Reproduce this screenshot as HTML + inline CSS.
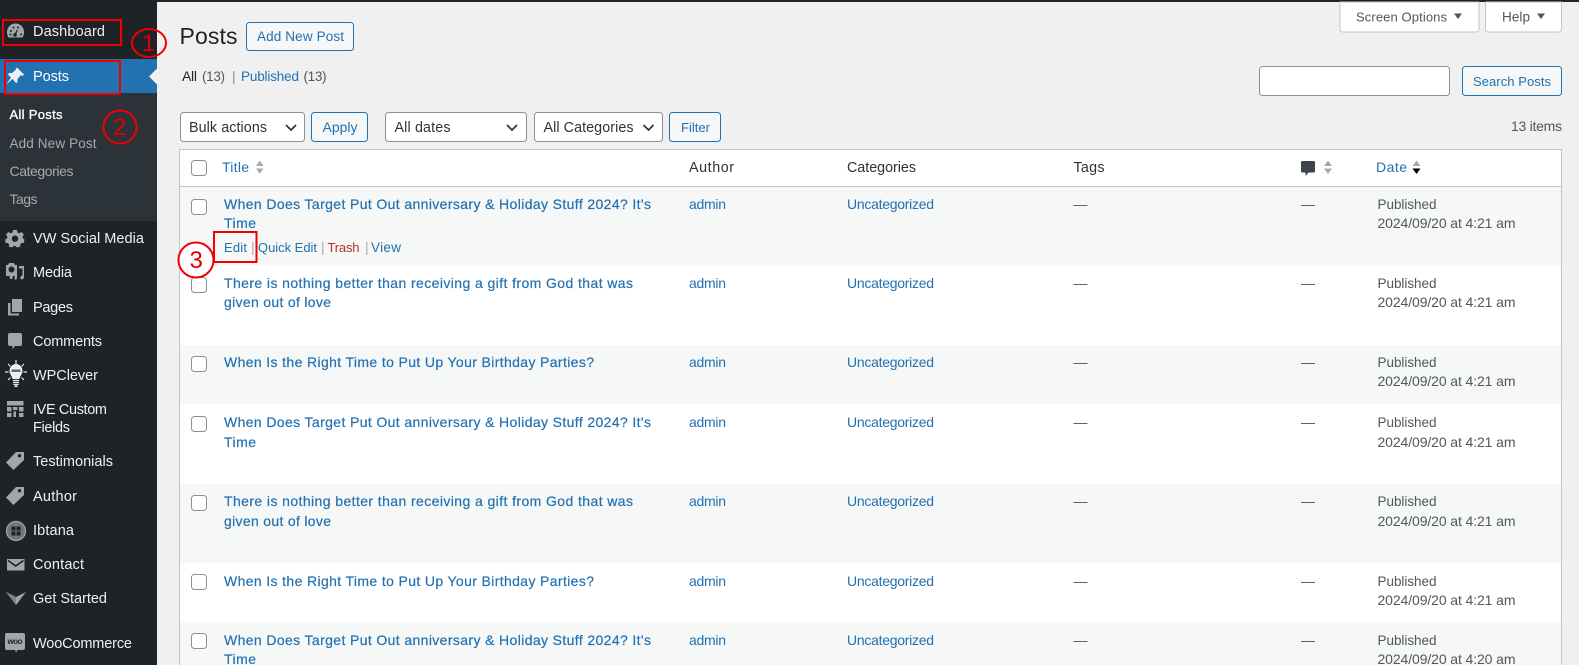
<!DOCTYPE html>
<html><head><meta charset="utf-8"><title>Posts</title>
<style>
html,body{margin:0;padding:0;background:#f0f0f1;width:1579px;height:665px;overflow:hidden}
svg{display:block}
text{font-family:"Liberation Sans",sans-serif;font-size:14px;fill:#50575e}
.m{fill:#f0f0f1;font-size:14.500px}
.s{fill:#a7abb0}
.l{fill:#2271b1}
.t{fill:#2271b1;stroke:#2271b1;stroke-width:.2px}
.h{fill:#2c3338;font-size:14.300px}
.i{fill:#a2a6ab}
.r{fill:none;stroke:#f00000;stroke-width:2}
.n{fill:#e00000;font-size:24px}
.f{fill:#fff;stroke:#8c8f94}
.b{fill:#f6f7f7;stroke:#2271b1}
.x{font-size:13px}
.y{font-size:13.500px}
</style></head><body>
<svg width="1579" height="665" viewBox="0 0 1579 665" xmlns="http://www.w3.org/2000/svg">
<rect width="1579" height="665" fill="#f0f0f1"/>
<rect width="1579" height="2" fill="#1d2327"/>
<!-- sidebar -->
<rect width="157" height="665" fill="#1d2327"/>
<rect y="59" width="157" height="34" fill="#2271b1"/>
<rect y="93" width="157" height="128" fill="#2c3338"/>
<path d="M157 68.500L149 76.500L157 84.500Z" fill="#f0f0f1"/>
<text class="m" x="33" y="36" textLength="72">Dashboard</text>
<text class="m" x="33" y="81" textLength="36" style="fill:#fff">Posts</text>
<text class="x" x="9.500" y="119" textLength="53" style="fill:#fff;stroke:#fff;stroke-width:.3px">All Posts</text>
<text class="s y" x="9.500" y="148" textLength="87">Add New Post</text>
<text class="s" x="9.500" y="176" textLength="64">Categories</text>
<text class="s" x="9.500" y="204" textLength="28">Tags</text>
<text class="m" x="33" y="243" textLength="111">VW Social Media</text>
<text class="m" x="33" y="277" textLength="39">Media</text>
<text class="m" x="33" y="312" textLength="40">Pages</text>
<text class="m" x="33" y="346" textLength="69">Comments</text>
<text class="m" x="33" y="380" textLength="65">WPClever</text>
<text class="m" x="33" y="414" textLength="74">IVE Custom</text>
<text class="m" x="33" y="432" textLength="37">Fields</text>
<text class="m" x="33" y="466" textLength="80">Testimonials</text>
<text class="m" x="33" y="501" textLength="44">Author</text>
<text class="m" x="33" y="535" textLength="41">Ibtana</text>
<text class="m" x="33" y="569" textLength="51">Contact</text>
<text class="m" x="33" y="603" textLength="74">Get Started</text>
<text class="m" x="33" y="648" textLength="99">WooCommerce</text>
<!-- sidebar icons -->
<path class="i" d="M15.500 23.500C10.500 23.500 7 27.500 7 32C7 34 7.500 36 8.500 37.500H22.500C23.500 36 24 34 24 32C24 27.500 20.500 23.500 15.500 23.500Z"/>
<g fill="#1d2327"><circle cx="11" cy="31" r="1"/><circle cx="13.500" cy="27.500" r="1"/><circle cx="18" cy="27.500" r="1"/><circle cx="10.500" cy="34.500" r="1"/><circle cx="21" cy="34.500" r="1"/><circle cx="15" cy="35" r="1.800"/><path d="M14.500 34L17 29.500L17.800 30L16 35Z"/></g>
<path d="M17 67.500L24 74.500L22.500 76L21 75L17.500 79L17.500 82L16 83L12.500 79L7 84L7 83.500L11 77.500L8 74.500L9 73L12 73L16 69.500L15.500 69Z" fill="#f0f0f1"/>
<path class="i" fill-rule="evenodd" d="M13 230H17L17.500 232.500L19.500 233.300L21.700 232L24 234.800L22.500 236.500L23 238.500L24.500 239.500L23.700 243L21.500 243L20 244.800L20.500 246.500L17 247.500L15.500 246L13.500 246L12 247.500L8.700 246.500L9.200 244.500L7.800 243L5.700 243L5 239.500L7 238.500L7.300 236.500L6 234.500L8.300 232L10.500 233.300L12.500 232.500ZM15 235.500A3.200 3.200 0 1 0 15.001 241.900A3.200 3.200 0 1 0 15 235.500Z"/>
<path class="i" fill-rule="evenodd" d="M9 263H14L15 265H17V276H13L12 279H10L9.500 276H6V265H8ZM11.500 266.500A3 3 0 1 0 11.501 272.500A3 3 0 1 0 11.500 266.500Z"/>
<path class="i" d="M19 266H24V277C24 279.500 21 280 20.500 278.500C20 277 21 275.500 22.500 275.500V268.500H19ZM14.500 278C14.500 276.500 15.500 275 17 275.200V277C17 280.500 14.500 280.500 14.500 278Z"/>
<path class="i" d="M12 299H22V312H12ZM8 303H10.500V313.500H19V315.500H8Z"/>
<path class="i" d="M10 333H20C21.200 333 22 333.800 22 335V344C22 345.200 21.200 346 20 346H15L12.500 349.500V346H10C8.800 346 8 345.200 8 344V335C8 333.800 8.800 333 10 333Z"/>
<g fill="none" stroke="#e8e8e8" stroke-width="1.200"><path d="M16 360V364M8 364L10.500 366.500M24 364L21.500 366.500M5 372H8.500M23.500 372H27M8 380L10.500 377.500M24 380L21.500 377.500"/></g>
<path fill="#f0f0f1" d="M16 364C12 364 9.500 367.500 9.500 371C9.500 374 12 376 12.500 379H19.500C20 376 22.500 374 22.500 371C22.500 367.500 20 364 16 364Z"/>
<rect x="11.500" y="369.500" width="9" height="2.500" fill="#6a6a6a"/>
<path d="M13 380.500H19M13 382.500H19M13.500 384.500H18.500" stroke="#f0f0f1" stroke-width="1.200"/><rect x="14.500" y="385.500" width="3" height="1.500" fill="#f0f0f1"/>
<g class="i"><rect x="7" y="401" width="16.500" height="4.500"/><rect x="7" y="407" width="4.500" height="4.500"/><rect x="13" y="407" width="4.500" height="3"/><rect x="19" y="407" width="4.500" height="4.500"/><rect x="7" y="413" width="4.500" height="4"/><rect x="13.500" y="411.500" width="2.500" height="5.500"/><rect x="19" y="413" width="4.500" height="4"/></g>
<path class="i" fill-rule="evenodd" d="M16 452H24V460L13.500 470L6 462.500ZM19.500 454A1.700 1.700 0 1 0 19.501 457.400A1.700 1.700 0 1 0 19.500 454Z"/>
<path class="i" fill-rule="evenodd" d="M16 487H24V495L13.500 505L6 497.500ZM19.500 489A1.700 1.700 0 1 0 19.501 492.400A1.700 1.700 0 1 0 19.500 489Z"/>
<circle cx="16" cy="531" r="9.500" fill="#73777b" stroke="#a2a6ab" stroke-width="1.200"/>
<g fill="#1d2327"><rect x="11.500" y="526.500" width="4" height="4"/><rect x="16.500" y="526.500" width="4" height="4"/><rect x="11.500" y="531.500" width="4" height="4"/><rect x="16.500" y="531.500" width="4" height="4"/></g>
<rect class="i" x="7" y="559" width="17.500" height="11.500"/>
<path d="M8 560.500L15.700 566L23.500 560.500" fill="none" stroke="#1d2327" stroke-width="1.600"/>
<path class="i" d="M6 592L16 597L26 592L16 605Z"/>
<path d="M6 592L16 597L16 605Z" fill="#7f8387"/>
<path class="i" d="M7 633H23C24.200 633 25 633.800 25 635V648C25 649.200 24.200 650 23 650H17.500L16 652.500L15 650H7C5.800 650 5 649.200 5 648V635C5 633.800 5.800 633 7 633Z"/>
<text x="7.500" y="644" textLength="15" style="font-size:8px;font-weight:bold;fill:#1d2327">woo</text>
<!-- annotations sidebar -->
<rect class="r" x="3" y="20" width="118" height="25"/>
<rect class="r" x="5" y="61" width="115" height="33"/>
<ellipse class="r" cx="149" cy="43" rx="17" ry="14"/>
<text class="n" x="142" y="51" textLength="14">1</text>
<circle class="r" cx="120" cy="127" r="16.500"/>
<text class="n" x="113" y="135">2</text>
<!-- header -->
<text x="179.500" y="44" style="font-size:23px;fill:#1d2327" textLength="58">Posts</text>
<rect class="b" x="246.500" y="22.500" width="107" height="28" rx="3"/>
<text class="l y" x="257" y="41" textLength="87">Add New Post</text>
<path d="M1340 2V29C1340 31 1341 32 1343 32H1476C1478 32 1479 31 1479 29V2Z M1485.500 2V29C1485.500 31 1486.500 32 1488.500 32H1558.500C1560.500 32 1561.500 31 1561.500 29V2Z" fill="#fff" stroke="#c3c4c7"/>
<text class="x" x="1356" y="21.500" textLength="91">Screen Options</text>
<path d="M1454 13.500H1462L1458 19Z M1537 13.500H1545L1541 19Z" fill="#50575e"/>
<text class="y" x="1502" y="21.500" textLength="28">Help</text>
<text x="182" y="81" style="fill:#1d2327" textLength="15">All</text>
<text class="y" x="202" y="81" textLength="23">(13)</text>
<text x="232" y="81" style="fill:#8c8f94">|</text>
<text class="l y" x="241" y="81" textLength="58">Published</text>
<text class="y" x="303.500" y="81" textLength="23">(13)</text>
<rect x="1259.500" y="66.500" width="190" height="29" rx="3" class="f"/>
<rect class="b" x="1462.500" y="66.500" width="99" height="29" rx="3"/>
<text class="l x" x="1473" y="86" textLength="78">Search Posts</text>
<!-- filters -->
<rect class="f" x="180.500" y="112.500" width="124" height="29" rx="3"/>
<text class="h" x="189" y="132" textLength="78">Bulk actions</text>
<path d="M286 125L291 130L296 125" fill="none" stroke="#2c3338" stroke-width="1.700"/>
<rect class="b" x="311.500" y="112.500" width="56" height="29" rx="3"/>
<text class="l" x="322.500" y="132" textLength="35">Apply</text>
<rect class="f" x="385.500" y="112.500" width="141" height="29" rx="3"/>
<text class="h" x="394.500" y="132" textLength="56">All dates</text>
<path d="M507 125L512 130L517 125" fill="none" stroke="#2c3338" stroke-width="1.700"/>
<rect class="f" x="534.500" y="112.500" width="128" height="29" rx="3"/>
<text class="h" x="543.500" y="132" textLength="90">All Categories</text>
<path d="M643.500 125L648.500 130L653.500 125" fill="none" stroke="#2c3338" stroke-width="1.700"/>
<rect class="b" x="669.500" y="112.500" width="51" height="29" rx="3"/>
<text class="l x" x="681" y="132" textLength="29">Filter</text>
<text x="1511" y="131" textLength="51">13 items</text>
<!-- table -->
<rect x="179.500" y="149.500" width="1382" height="516" fill="#fff" stroke="#c3c4c7"/>
<path d="M180 186.500H1561" stroke="#c3c4c7"/>
<rect x="180" y="187" width="1381" height="79" fill="#f6f7f7"/>
<rect x="180" y="345" width="1381" height="59" fill="#f6f7f7"/>
<rect x="180" y="484" width="1381" height="79" fill="#f6f7f7"/>
<rect x="180" y="622" width="1381" height="43" fill="#f6f7f7"/>
<rect class="f" x="191.500" y="160.500" width="15" height="15" rx="3"/>
<text class="l" x="222" y="172" textLength="27">Title</text>
<path d="M256 166L259.800 160.500L263.500 166ZM256 168.500H263.500L259.800 174Z" fill="#a7aaad"/>
<text class="h" x="689" y="172" textLength="45">Author</text>
<text class="h" x="847" y="172" textLength="69">Categories</text>
<text class="h" x="1073.500" y="172" textLength="31">Tags</text>
<path d="M1302.500 161H1313.500C1314.500 161 1315 161.500 1315 162.500V171C1315 172 1314.500 172.500 1313.500 172.500H1308.500L1305.500 176V172.500H1302.500C1301.500 172.500 1301 172 1301 171V162.500C1301 161.500 1301.500 161 1302.500 161Z" fill="#3c434a"/>
<path d="M1324 166L1328 160.500L1332 166ZM1324 168.500H1332L1328 174Z" fill="#a7aaad"/>
<text class="l" x="1376" y="172" textLength="31">Date</text>
<path d="M1412.500 166L1416.500 160.500L1420.500 166Z" fill="#a7aaad"/>
<path d="M1412.500 168.500H1420.500L1416.500 174Z" fill="#000"/>
<!-- row 1 -->
<rect class="f" x="191.500" y="199.500" width="15" height="15" rx="3"/>
<text class="t" x="224" y="209" textLength="427">When Does Target Put Out anniversary &amp; Holiday Stuff 2024? It's</text>
<text class="t" x="224" y="228" textLength="32">Time</text>
<text class="l x" x="224" y="252" textLength="23">Edit</text>
<text x="251" y="252" style="fill:#a7aaad">|</text>
<text class="l x" x="258" y="252" textLength="59">Quick Edit</text>
<text x="321" y="252" style="fill:#a7aaad">|</text>
<text class="x" x="327.500" y="252" textLength="32" style="fill:#b32d2e">Trash</text>
<text x="365" y="252" style="fill:#a7aaad">|</text>
<text class="l y" x="371" y="252" textLength="30">View</text>
<text class="l" x="689" y="209" textLength="37">admin</text>
<text class="l" x="847" y="209" textLength="87">Uncategorized</text>
<text x="1073.500" y="209" textLength="14">—</text>
<text x="1301" y="209" textLength="14">—</text>
<text class="y" x="1377.500" y="209" textLength="59">Published</text>
<text x="1377.500" y="228" textLength="138">2024/09/20 at 4:21 am</text>
<!-- row 2 -->
<rect class="f" x="191.500" y="277.500" width="15" height="15" rx="3"/>
<text class="t" x="224" y="288" textLength="409">There is nothing better than receiving a gift from God that was</text>
<text class="t" x="224" y="307" textLength="107">given out of love</text>
<text class="l" x="689" y="288" textLength="37">admin</text>
<text class="l" x="847" y="288" textLength="87">Uncategorized</text>
<text x="1073.500" y="288" textLength="14">—</text>
<text x="1301" y="288" textLength="14">—</text>
<text class="y" x="1377.500" y="288" textLength="59">Published</text>
<text x="1377.500" y="307" textLength="138">2024/09/20 at 4:21 am</text>
<!-- row 3 -->
<rect class="f" x="191.500" y="356.500" width="15" height="15" rx="3"/>
<text class="t" x="224" y="367" textLength="370">When Is the Right Time to Put Up Your Birthday Parties?</text>
<text class="l" x="689" y="367" textLength="37">admin</text>
<text class="l" x="847" y="367" textLength="87">Uncategorized</text>
<text x="1073.500" y="367" textLength="14">—</text>
<text x="1301" y="367" textLength="14">—</text>
<text class="y" x="1377.500" y="367" textLength="59">Published</text>
<text x="1377.500" y="386" textLength="138">2024/09/20 at 4:21 am</text>
<!-- row 4 -->
<rect class="f" x="191.500" y="416.500" width="15" height="15" rx="3"/>
<text class="t" x="224" y="427" textLength="427">When Does Target Put Out anniversary &amp; Holiday Stuff 2024? It's</text>
<text class="t" x="224" y="447" textLength="32">Time</text>
<text class="l" x="689" y="427" textLength="37">admin</text>
<text class="l" x="847" y="427" textLength="87">Uncategorized</text>
<text x="1073.500" y="427" textLength="14">—</text>
<text x="1301" y="427" textLength="14">—</text>
<text class="y" x="1377.500" y="427" textLength="59">Published</text>
<text x="1377.500" y="447" textLength="138">2024/09/20 at 4:21 am</text>
<!-- row 5 -->
<rect class="f" x="191.500" y="495.500" width="15" height="15" rx="3"/>
<text class="t" x="224" y="506" textLength="409">There is nothing better than receiving a gift from God that was</text>
<text class="t" x="224" y="526" textLength="107">given out of love</text>
<text class="l" x="689" y="506" textLength="37">admin</text>
<text class="l" x="847" y="506" textLength="87">Uncategorized</text>
<text x="1073.500" y="506" textLength="14">—</text>
<text x="1301" y="506" textLength="14">—</text>
<text class="y" x="1377.500" y="506" textLength="59">Published</text>
<text x="1377.500" y="526" textLength="138">2024/09/20 at 4:21 am</text>
<!-- row 6 -->
<rect class="f" x="191.500" y="574.500" width="15" height="15" rx="3"/>
<text class="t" x="224" y="586" textLength="370">When Is the Right Time to Put Up Your Birthday Parties?</text>
<text class="l" x="689" y="586" textLength="37">admin</text>
<text class="l" x="847" y="586" textLength="87">Uncategorized</text>
<text x="1073.500" y="586" textLength="14">—</text>
<text x="1301" y="586" textLength="14">—</text>
<text class="y" x="1377.500" y="586" textLength="59">Published</text>
<text x="1377.500" y="605" textLength="138">2024/09/20 at 4:21 am</text>
<!-- row 7 -->
<rect class="f" x="191.500" y="633.500" width="15" height="15" rx="3"/>
<text class="t" x="224" y="645" textLength="427">When Does Target Put Out anniversary &amp; Holiday Stuff 2024? It's</text>
<text class="t" x="224" y="664" textLength="32">Time</text>
<text class="l" x="689" y="645" textLength="37">admin</text>
<text class="l" x="847" y="645" textLength="87">Uncategorized</text>
<text x="1073.500" y="645" textLength="14">—</text>
<text x="1301" y="645" textLength="14">—</text>
<text class="y" x="1377.500" y="645" textLength="59">Published</text>
<text x="1377.500" y="664" textLength="138">2024/09/20 at 4:20 am</text>
<!-- annotation 3 -->
<rect class="r" x="214" y="232" width="42.500" height="30"/>
<circle class="r" cx="196" cy="260" r="17.500" style="fill:#fff"/>
<text class="n" x="189.500" y="268">3</text>
</svg>
</body></html>
